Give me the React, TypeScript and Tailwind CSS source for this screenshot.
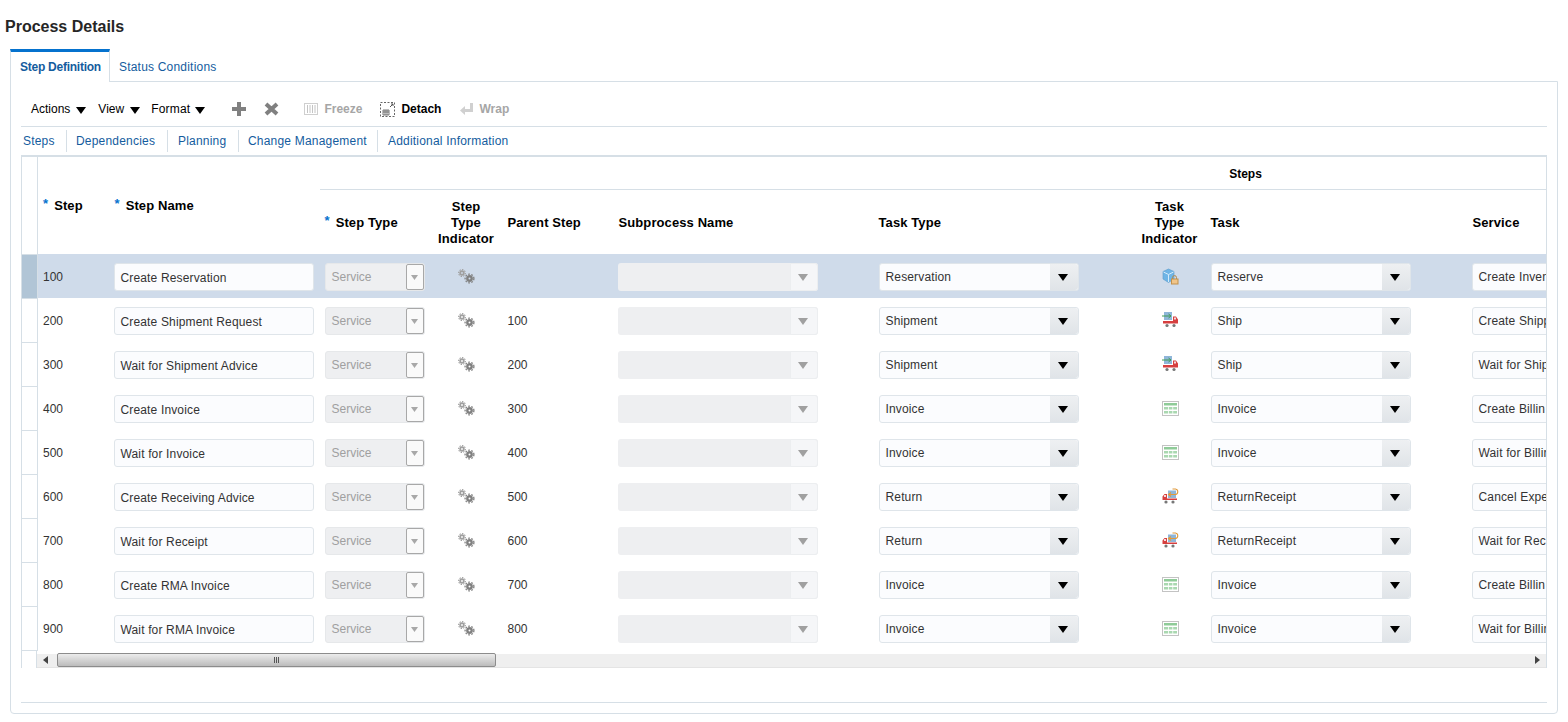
import React from 'react';

type TaskIcon = 'reserve' | 'ship' | 'invoice' | 'return';

interface Row {
  step: string;
  name: string;
  parent: string;
  taskType: string;
  icon: TaskIcon;
  task: string;
  service: string;
}

const rows: Row[] = [
  { step: '100', name: 'Create Reservation', parent: '', taskType: 'Reservation', icon: 'reserve', task: 'Reserve', service: 'Create Inven' },
  { step: '200', name: 'Create Shipment Request', parent: '100', taskType: 'Shipment', icon: 'ship', task: 'Ship', service: 'Create Shipp' },
  { step: '300', name: 'Wait for Shipment Advice', parent: '200', taskType: 'Shipment', icon: 'ship', task: 'Ship', service: 'Wait for Ship' },
  { step: '400', name: 'Create Invoice', parent: '300', taskType: 'Invoice', icon: 'invoice', task: 'Invoice', service: 'Create Billin' },
  { step: '500', name: 'Wait for Invoice', parent: '400', taskType: 'Invoice', icon: 'invoice', task: 'Invoice', service: 'Wait for Billin' },
  { step: '600', name: 'Create Receiving Advice', parent: '500', taskType: 'Return', icon: 'return', task: 'ReturnReceipt', service: 'Cancel Expe' },
  { step: '700', name: 'Wait for Receipt', parent: '600', taskType: 'Return', icon: 'return', task: 'ReturnReceipt', service: 'Wait for Rec' },
  { step: '800', name: 'Create RMA Invoice', parent: '700', taskType: 'Invoice', icon: 'invoice', task: 'Invoice', service: 'Create Billin' },
  { step: '900', name: 'Wait for RMA Invoice', parent: '800', taskType: 'Invoice', icon: 'invoice', task: 'Invoice', service: 'Wait for Billin' },
];

const subTabs = [
  { label: 'Steps', cls: 'w-[46px] pl-[2px] border-r' },
  { label: 'Dependencies', cls: 'w-[101px] pl-[9px] border-r' },
  { label: 'Planning', cls: 'w-[71px] pl-[10px] border-r' },
  { label: 'Change Management', cls: 'w-[139px] pl-[9px] border-r' },
  { label: 'Additional Information', cls: 'pl-[10px]' },
];

const Arrow = ({ className }: { className: string }) => (
  <svg width="10" height="7" viewBox="0 0 10 7" className={className}>
    <path d="M0 0h10L5 7z" fill="currentColor" />
  </svg>
);

const Gears = () => (
  <svg width="17" height="15" viewBox="0 0 17 15" className="mx-auto block">
    <circle cx="4" cy="4" r="1.8" fill="none" stroke="#a0a0a0" strokeWidth="1.8" />
    <circle cx="4" cy="4" r="3.4" fill="none" stroke="#a0a0a0" strokeWidth="1.1" strokeDasharray="1.4 1.2" />
    <circle cx="11.5" cy="9.5" r="2.2" fill="none" stroke="#808080" strokeWidth="2.4" />
    <circle cx="11.5" cy="9.5" r="4.4" fill="none" stroke="#808080" strokeWidth="1.3" strokeDasharray="1.7 1.45" />
  </svg>
);

const TaskGlyph = ({ icon }: { icon: TaskIcon }) => {
  if (icon === 'reserve') {
    return (
      <svg width="17" height="17" viewBox="0 0 17 17" className="mx-auto block">
        <path d="M1 3.5 6.5 1 12 3.5v7.5l-5.5 3.5L1 11z" fill="#6fb5e6" stroke="#5a9bcb" strokeWidth=".6" />
        <path d="M1.5 4 6.5 6.5 11.5 4M6.5 6.5v7.5" fill="none" stroke="#d5ebfa" strokeWidth="1" />
        <path d="M10.5 11V9.6a2 2 0 0 1 4 0V11" fill="none" stroke="#b08a50" strokeWidth="1" />
        <rect x="9.5" y="11" width="6.5" height="5" fill="#f0c58a" stroke="#c2914d" strokeWidth="1" />
      </svg>
    );
  }
  if (icon === 'ship') {
    return (
      <svg width="17" height="16" viewBox="0 0 17 16" className="mx-auto block">
        <rect x="2" y="0" width="8" height="8" fill="#8fb6d9" />
        <path d="M0 4h8.500M6.500 2l2.500 2-2.500 2" fill="none" stroke="#3f9c52" strokeWidth="1" />
        <path d="M1 9h10V4.500h3l2 3v4H1z" fill="#d63f3f" />
        <rect x="12" y="5.500" width="2" height="2" fill="#f6dcdc" />
        <circle cx="5" cy="13.500" r="1.600" fill="#777" />
        <circle cx="12" cy="13.500" r="1.600" fill="#777" />
      </svg>
    );
  }
  if (icon === 'return') {
    return (
      <svg width="17" height="16" viewBox="0 0 17 16" className="mx-auto block">
        <rect x="6" y="2.500" width="8" height="7.500" fill="#8fb6d9" />
        <path d="M7 6.500h6.500a2.800 2.800 0 0 0 0-5.500H10.500M9 4.500l-2.500 2 2.500 2" fill="none" stroke="#e09a3c" strokeWidth="1.100" />
        <path d="M15 10.500H5V6H2.500L.5 8.500v3.500H15z" fill="#d63f3f" />
        <rect x="2" y="7" width="2" height="2" fill="#f6dcdc" />
        <circle cx="4" cy="14" r="1.600" fill="#777" />
        <circle cx="11" cy="14" r="1.600" fill="#777" />
      </svg>
    );
  }
  return (
    <svg width="17" height="15" viewBox="0 0 17 15" className="mx-auto block">
      <rect x=".5" y=".5" width="16" height="14" fill="#fff" stroke="#c3c3c3" />
      <rect x="2" y="2" width="13" height="2.500" fill="#8fcb98" />
      <rect x="2" y="6" width="4" height="2.500" fill="#a9d8b0" />
      <rect x="6.800" y="6" width="3.600" height="2.500" fill="#a9d8b0" />
      <rect x="11.200" y="6" width="3.800" height="2.500" fill="#a9d8b0" />
      <rect x="2" y="10" width="4" height="2.500" fill="#a9d8b0" />
      <rect x="6.800" y="10" width="3.600" height="2.500" fill="#a9d8b0" />
      <rect x="11.200" y="10" width="3.800" height="2.500" fill="#a9d8b0" />
    </svg>
  );
};

const Required = () => <span className="text-[#0572ce] text-[13px] font-bold align-[2px] mr-[6px]">*</span>;

const ChoiceBox = ({ value }: { value: string }) => (
  <div className="w-[200px] h-[28px] flex rounded-[3px] border border-[#dfe5ea] bg-[#fbfcfe] text-[#333] tracking-[.15px]">
    <span className="flex-1 pl-[6px] leading-[27px] overflow-hidden">{value}</span>
    <span className="w-[28px] pr-[2px] flex items-center justify-center rounded-r-[3px] bg-linear-to-b from-[#eef0f2] to-[#e0e4e8] text-black">
      <Arrow className="" />
    </span>
  </div>
);

const headCell = 'font-bold text-left align-middle px-[6px] text-black text-[13px] tracking-[.1px] leading-[16px]';
const subHead = 'pt-[2px]';
const bodyText = 'align-middle pl-[5px] pt-[1px] text-[#333]';
const boxCell = 'align-top pt-[9px] pl-[6px]';

export default function App() {
  return (
    <div className="w-[1568px] h-[722px] overflow-hidden bg-white text-[12px] [font-family:'Liberation_Sans',Arial,sans-serif]">
      <h1 className="pl-[5px] pt-[17px] h-[49px] text-[16px] leading-[20px] font-bold text-[#262626]">Process Details</h1>

      <div className="flex ml-[10px] h-[33px] relative z-10">
        <div className="w-[100px] h-[33px] border-t-[3px] border-x border-t-[#0572ce] border-x-[#d6dfe6] bg-white font-bold text-[#145c9e] pl-[9px] pt-[8px] leading-[14px] tracking-[-.25px]">
          Step Definition
        </div>
        <div className="pl-[9px] pt-[11px] leading-[14px] text-[#145c9e] tracking-[.2px]">Status Conditions</div>
      </div>

      <div className="ml-[10px] w-[1548px] h-[633px] -mt-px border border-[#d6dfe6] rounded-b-[4px] px-[10px]">
        <div className="flex items-center h-[45px] pt-[10px] border-b border-[#d6dfe6] text-black">
          <span className="ml-[10px]">Actions</span>
          <Arrow className="ml-[6px] mt-[2px]" />
          <span className="ml-[12px]">View</span>
          <Arrow className="ml-[6px] mt-[2px]" />
          <span className="ml-[11px] tracking-[.2px]">Format</span>
          <Arrow className="ml-[5px] mt-[2px]" />
          <svg width="14" height="14" viewBox="0 0 14 14" className="ml-[27px]">
            <path d="M5 0h4v5h5v4H9v5H5V9H0V5h5z" fill="#808080" />
          </svg>
          <svg width="15" height="14" viewBox="0 0 15 14" className="ml-[18px]">
            <path d="M2 2l11 10M13 2L2 12" fill="none" stroke="#808080" strokeWidth="4" />
          </svg>
          <svg width="14" height="14" viewBox="0 0 14 14" className="ml-[25px]">
            <rect x=".5" y="1.500" width="13" height="11" fill="#fff" stroke="#cfcfcf" />
            <path d="M3.500 3v8M6 3v8M8.500 3v8M11 3v8" stroke="#c4c4c4" />
          </svg>
          <span className="ml-[6px] font-bold text-[#a6a6a6]">Freeze</span>
          <svg width="16" height="16" viewBox="0 0 16 16" className="ml-[18px]">
            <rect x=".5" y="1.500" width="14" height="14" fill="none" stroke="#666" strokeDasharray="2 1.500" />
            <path d="M3 9h6v5H3zM3 11h6M5 9v5M7 9v5" fill="none" stroke="#555" strokeWidth=".8" />
            <path d="M10 6l3-3M11 3h2v2" fill="none" stroke="#555" />
          </svg>
          <span className="ml-[5px] font-bold text-black">Detach</span>
          <svg width="14" height="14" viewBox="0 0 14 14" className="ml-[19px]">
            <path d="M10 1h3v9H5v3L0 8.500 5 4v3h5z" fill="#d0d0d0" />
          </svg>
          <span className="ml-[5px] font-bold text-[#a6a6a6]">Wrap</span>
        </div>

        <div className="flex h-[28px] pt-[3px] text-[#145c9e] leading-[22px] tracking-[.2px]">
          {subTabs.map((t) => (
            <div key={t.label} className={`h-[22px] border-[#d6dfe6] ${t.cls}`}>
              {t.label}
            </div>
          ))}
        </div>

        <div className="w-[1526px] overflow-hidden border-t-2 border-r border-[#d6dfe6]">
          <table className="table-fixed border-collapse w-[2150px]">
            <colgroup>
              <col className="w-[16px]" />
              <col className="w-[70px]" />
              <col className="w-[212px]" />
              <col className="w-[112px]" />
              <col className="w-[69px]" />
              <col className="w-[111px]" />
              <col className="w-[261px]" />
              <col className="w-[260px]" />
              <col className="w-[72px]" />
              <col className="w-[261px]" />
              <col className="w-[706px]" />
            </colgroup>
            <thead>
              <tr className="h-[32px]">
                <th rowSpan={2} className="border-x border-[#d6dfe6]" />
                <th rowSpan={2} className={`${headCell} !pl-[5px] pb-[2px]`}><Required />Step</th>
                <th rowSpan={2} className={`${headCell} !pl-[7px] pb-[2px]`}><Required />Step Name</th>
                <th colSpan={8} className="font-bold text-center text-black pt-[2px] border-b border-[#d6dfe6]">Steps</th>
              </tr>
              <tr className="h-[65px]">
                <th className={`${headCell} !pl-[5px]`}><Required />Step Type</th>
                <th className={`${headCell} ${subHead} !px-0 !text-center`}>Step<br />Type<br />Indicator</th>
                <th className={`${headCell} ${subHead} !pl-[7px]`}>Parent Step</th>
                <th className={`${headCell} ${subHead} !pl-[7px]`}>Subprocess Name</th>
                <th className={`${headCell} ${subHead}`}>Task Type</th>
                <th className={`${headCell} ${subHead} !pr-0 !pl-[2px] !text-center`}>Task<br />Type<br />Indicator</th>
                <th className={`${headCell} ${subHead}`}>Task</th>
                <th className={`${headCell} ${subHead} !pl-[7px]`}>Service</th>
              </tr>
            </thead>
            <tbody>
              {rows.map((r, i) => (
                <tr key={r.step} className={`h-[44px] ${i === 0 ? 'bg-[#cfdbea]' : ''}`}>
                  <td className={`border border-[#d6dfe6] ${i === 0 ? 'bg-[#b1c5d6]' : ''}`} />
                  <td className={bodyText}>{r.step}</td>
                  <td className={boxCell}>
                    <div className="w-[200px] h-[28px] pl-[6px] leading-[28px] rounded-[3px] border border-[#dfe5ea] bg-[#fbfcfe] text-[#333] tracking-[.15px]">{r.name}</div>
                  </td>
                  <td className="align-top pt-[9px] pl-[5px]">
                    <div className="w-[100px] h-[28px] flex rounded-[3px] bg-[#eeeff1] border border-[#e6e8ea]">
                      <span className="flex-1 pl-[6px] leading-[27px] text-[#a0a0a0]">Service</span>
                      <span className="w-[18px] h-[26px] flex items-center justify-center border border-[#a8a8a8] rounded-[2px] bg-[#fafafa] text-[#a8a8a8]">
                        <Arrow className="w-[7px] h-[5px]" />
                      </span>
                    </div>
                  </td>
                  <td className="align-middle"><Gears /></td>
                  <td className={`${bodyText} !pl-[7px]`}>{r.parent}</td>
                  <td className={boxCell}>
                    <div className="w-[200px] h-[28px] flex rounded-[3px] bg-[#eeeff1]">
                      <span className="flex-1" />
                      <span className="w-[28px] pr-[2px] flex items-center justify-center rounded-r-[3px] bg-[#f5f6f8] text-[#a0a0a0] border border-[#eceef0]">
                        <Arrow className="" />
                      </span>
                    </div>
                  </td>
                  <td className={boxCell}><ChoiceBox value={r.taskType} /></td>
                  <td className="align-middle pl-[3px]"><TaskGlyph icon={r.icon} /></td>
                  <td className={boxCell}><ChoiceBox value={r.task} /></td>
                  <td className={boxCell}>
                    <div className="w-[200px] h-[28px] pl-[6px] leading-[27px] rounded-[3px] border border-[#dfe5ea] bg-[#fbfcfe] text-[#333] tracking-[.15px]">{r.service}</div>
                  </td>
                </tr>
              ))}
            </tbody>
          </table>

          <div className="flex h-[17px]">
            <div className="w-[16px] border-x border-[#d6dfe6]" />
            <div className="flex-1 mt-[3px] flex items-center bg-[#efefef] border-b border-[#e4e4e4]">
              <svg width="5" height="8" viewBox="0 0 5 8" className="ml-[6px]">
                <path d="M5 0v8L0 4z" fill="#444" />
              </svg>
              <div className="ml-[9px] w-[439px] h-[14px] flex items-center justify-center gap-[1px] rounded-[2px] border border-[#8c8c8c] bg-linear-to-b from-[#ececec] to-[#bcbcbc]">
                <span className="w-[1px] h-[6px] bg-[#555]" />
                <span className="w-[1px] h-[6px] bg-[#555]" />
                <span className="w-[1px] h-[6px] bg-[#555]" />
              </div>
              <svg width="5" height="8" viewBox="0 0 5 8" className="ml-auto mr-[6px]">
                <path d="M0 0v8l5-4z" fill="#444" />
              </svg>
            </div>
          </div>
        </div>

        <div className="mt-[34px] border-t border-[#d6dfe6]" />
      </div>
    </div>
  );
}
